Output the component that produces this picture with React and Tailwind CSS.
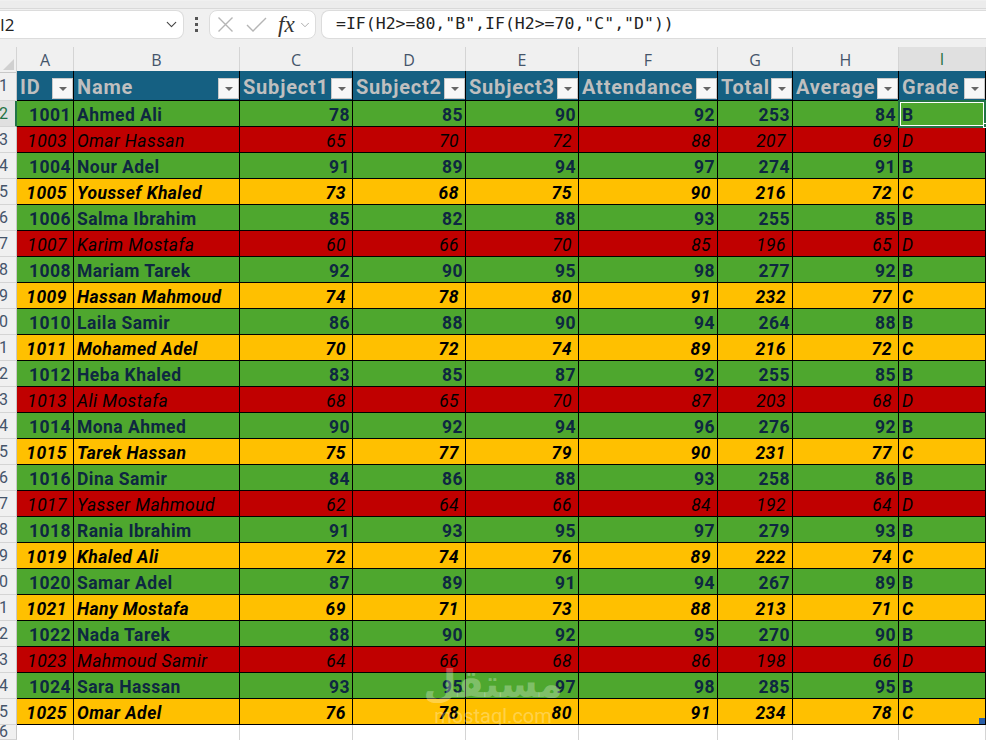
import { ChevronDown } from 'lucide-react'

const rows = [
    [1001, 'Ahmed Ali', 78, 85, 90, 92, 253, 84, 'B'],
    [1003, 'Omar Hassan', 65, 70, 72, 88, 207, 69, 'D'],
    [1004, 'Nour Adel', 91, 89, 94, 97, 274, 91, 'B'],
    [1005, 'Youssef Khaled', 73, 68, 75, 90, 216, 72, 'C'],
    [1006, 'Salma Ibrahim', 85, 82, 88, 93, 255, 85, 'B'],
    [1007, 'Karim Mostafa', 60, 66, 70, 85, 196, 65, 'D'],
    [1008, 'Mariam Tarek', 92, 90, 95, 98, 277, 92, 'B'],
    [1009, 'Hassan Mahmoud', 74, 78, 80, 91, 232, 77, 'C'],
    [1010, 'Laila Samir', 86, 88, 90, 94, 264, 88, 'B'],
    [1011, 'Mohamed Adel', 70, 72, 74, 89, 216, 72, 'C'],
    [1012, 'Heba Khaled', 83, 85, 87, 92, 255, 85, 'B'],
    [1013, 'Ali Mostafa', 68, 65, 70, 87, 203, 68, 'D'],
    [1014, 'Mona Ahmed', 90, 92, 94, 96, 276, 92, 'B'],
    [1015, 'Tarek Hassan', 75, 77, 79, 90, 231, 77, 'C'],
    [1016, 'Dina Samir', 84, 86, 88, 93, 258, 86, 'B'],
    [1017, 'Yasser Mahmoud', 62, 64, 66, 84, 192, 64, 'D'],
    [1018, 'Rania Ibrahim', 91, 93, 95, 97, 279, 93, 'B'],
    [1019, 'Khaled Ali', 72, 74, 76, 89, 222, 74, 'C'],
    [1020, 'Samar Adel', 87, 89, 91, 94, 267, 89, 'B'],
    [1021, 'Hany Mostafa', 69, 71, 73, 88, 213, 71, 'C'],
    [1022, 'Nada Tarek', 88, 90, 92, 95, 270, 90, 'B'],
    [1023, 'Mahmoud Samir', 64, 66, 68, 86, 198, 66, 'D'],
    [1024, 'Sara Hassan', 93, 95, 97, 98, 285, 95, 'B'],
    [1025, 'Omar Adel', 76, 78, 80, 91, 234, 78, 'C'],
]

const columns = ['ID', 'Name', 'Subject1', 'Subject2', 'Subject3', 'Attendance', 'Total', 'Average', 'Grade']
const letters = ['A', 'B', 'C', 'D', 'E', 'F', 'G', 'H', 'I']

const gradeStyles = {
    B: 'bg-[#4ea72e] text-[#0e2841] font-bold tracking-[0.45px]',
    C: 'bg-[#ffc000] text-black font-bold italic tracking-[0.45px]',
    D: 'bg-[#c00000] text-black italic tracking-[0.4px]',
}

const gridCols = 'grid grid-cols-[17px_57px_166px_113px_113px_113px_139px_75px_106px_87px]'

function RowNumber({ n, active }) {
    return (
        <div className={`flex items-center justify-end overflow-hidden text-[16px] border-b border-[#d4d4d4] ${active ? 'bg-[#e0e0e0] text-[#1f7244] border-r-2 border-r-[#217346] pr-[7px]' : 'bg-[#f0f0f0] text-[#44546a] border-r border-r-[#c8c8c8] pr-[8px]'}`}>
            {n}
        </div>
    )
}

function FilterButton() {
    return (
        <div className="absolute right-0 top-[7px] w-[21px] h-[21px] bg-[#f7f7f7] border border-[#c9c9c9] flex items-center justify-center">
            <div className="w-0 h-0 border-x-[4px] border-x-transparent border-t-[4px] border-t-[#666666]" />
        </div>
    )
}

function App() {
    return (
        <div className="relative w-[986px] h-[740px] overflow-hidden bg-white font-['Roboto',sans-serif]">
            {/* Formula bar */}
            <div className="h-[47px] bg-[#f0f0f0] pt-[1px]">
                <div className="h-[8px] bg-[#ececec] border-b border-[#d9d9d9]" />
                <div className="flex items-center h-[29px] mt-[1px]">
                    <div className="w-[184px] h-[29px] bg-white border border-[#dcdcdc] rounded-r-[8px] border-l-0 flex items-center justify-between pr-[3px]">
                        <span className="text-[17px] text-[#222222] font-['Open_Sans',sans-serif]">I2</span>
                        <ChevronDown size={17} strokeWidth={1.6} className="text-[#444444]" />
                    </div>
                    <div className="w-[25px] flex flex-col items-center gap-[3px]">
                        <div className="w-[3px] h-[3px] bg-[#555555]" />
                        <div className="w-[3px] h-[3px] bg-[#555555]" />
                        <div className="w-[3px] h-[3px] bg-[#555555]" />
                    </div>
                    <div className="w-[107px] h-[29px] bg-white border border-[#dcdcdc] rounded-[8px] flex items-center pl-[7px]">
                        <svg width="17" height="17" viewBox="0 0 17 17" fill="none" stroke="#b5b5b5" strokeWidth="1.4">
                            <path d="M1.5 1.5L15.5 15.5M15.5 1.5L1.5 15.5" />
                        </svg>
                        <svg width="21" height="17" viewBox="0 0 21 17" fill="none" stroke="#b5b5b5" strokeWidth="1.4" className="ml-[12px]">
                            <path d="M1 9L7 15L20 2" />
                        </svg>
                        <span className="ml-[11px] text-[23px] leading-none italic text-[#333333] font-['Liberation_Serif',serif]">fx</span>
                        <ChevronDown size={14} strokeWidth={1.4} className="ml-[3px] text-[#9a9a9a]" />
                    </div>
                    <div className="ml-[5px] flex-1 h-[29px] bg-white border border-[#dcdcdc] rounded-l-[8px] border-r-0 flex items-center pl-[14px] text-[16.5px] text-[#222222] font-['DejaVu_Sans_Mono',monospace]">
                        {'=IF(H2>=80,"B",IF(H2>=70,"C","D"))'}
                    </div>
                </div>
            </div>

            {/* Column letters */}
            <div className={`${gridCols} h-[24px] bg-[#f0f0f0]`}>
                <div className="relative bg-[#f0f0f0] border-r border-[#d4d4d4] border-b border-b-[#c8c8c8]">
                    <div className="absolute right-[2px] bottom-[2px] w-0 h-0 border-l-[11px] border-l-transparent border-b-[11px] border-b-[#d0d0d0]" />
                </div>
                {letters.map(l => (
                    <div key={l} className={`flex items-center justify-center text-[16px] font-['Open_Sans',sans-serif] border-r border-r-[#d4d4d4] ${l === 'I' ? 'bg-[#e0e0e0] text-[#1f7244] border-b-2 border-b-[#217346]' : 'text-[#44546a] border-b border-b-[#c8c8c8]'}`}>
                        {l}
                    </div>
                ))}
            </div>

            {/* Sheet */}
            <div className={`${gridCols} grid-rows-[30px_repeat(24,26px)_15px]`}>
                <RowNumber n={1} />
                {columns.map(c => (
                    <div key={c} className="relative bg-[#156082] text-[#bfbfbf] font-bold text-[20px] tracking-[0.8px] pl-[3px] pt-[2px] flex items-center border-r border-b border-black whitespace-nowrap overflow-hidden">
                        {c}
                        <FilterButton />
                    </div>
                ))}

                {rows.map((row, i) => {
                    const style = gradeStyles[row[8]]
                    const pad = row[8] === 'B' ? 'pr-[2px]' : 'pr-[6px]'
                    return [
                        <RowNumber key={`n${i}`} n={i + 2} active={i === 0} />,
                        ...row.map((val, j) => {
                            const isText = j === 1 || j === 8
                            return (
                                <div
                                    key={`${i}-${j}`}
                                    className={`relative flex items-center pt-[4px] text-[17.5px] whitespace-nowrap overflow-hidden border-r border-b border-black ${style} ${isText ? 'pl-[3px]' : `justify-end ${pad}`}`}
                                >
                                    {val}
                                </div>
                            )
                        }),
                    ]
                })}

                <RowNumber n={26} />
                {letters.map(l => (
                    <div key={l} className="bg-white border-r border-[#d4d4d4]" />
                ))}
            </div>

            {/* Selected cell I2 */}
            <div className="absolute left-[898px] top-[100px] w-[88px] h-[28px] border-2 border-[#217346]">
                <div className="w-full h-full border border-white" />
            </div>
            <div className="absolute left-[983px] top-[123px] w-[5px] h-[5px] bg-[#217346] border border-white" />

            {/* Table resize handle */}
            <div className="absolute left-[979px] top-[718px] w-[6px] h-[6px] bg-[#2a5fa8]" />

            {/* Watermark */}
            <div className="absolute left-[423px] top-[662px] w-[140px] flex flex-col items-center text-white/30 pointer-events-none">
                <span className="text-[38px] leading-[44px] font-bold font-['DejaVu_Sans',sans-serif]">مستقل</span>
                <span className="text-[20px] leading-[20px]">mostaql.com</span>
            </div>
        </div>
    )
}

export default App
